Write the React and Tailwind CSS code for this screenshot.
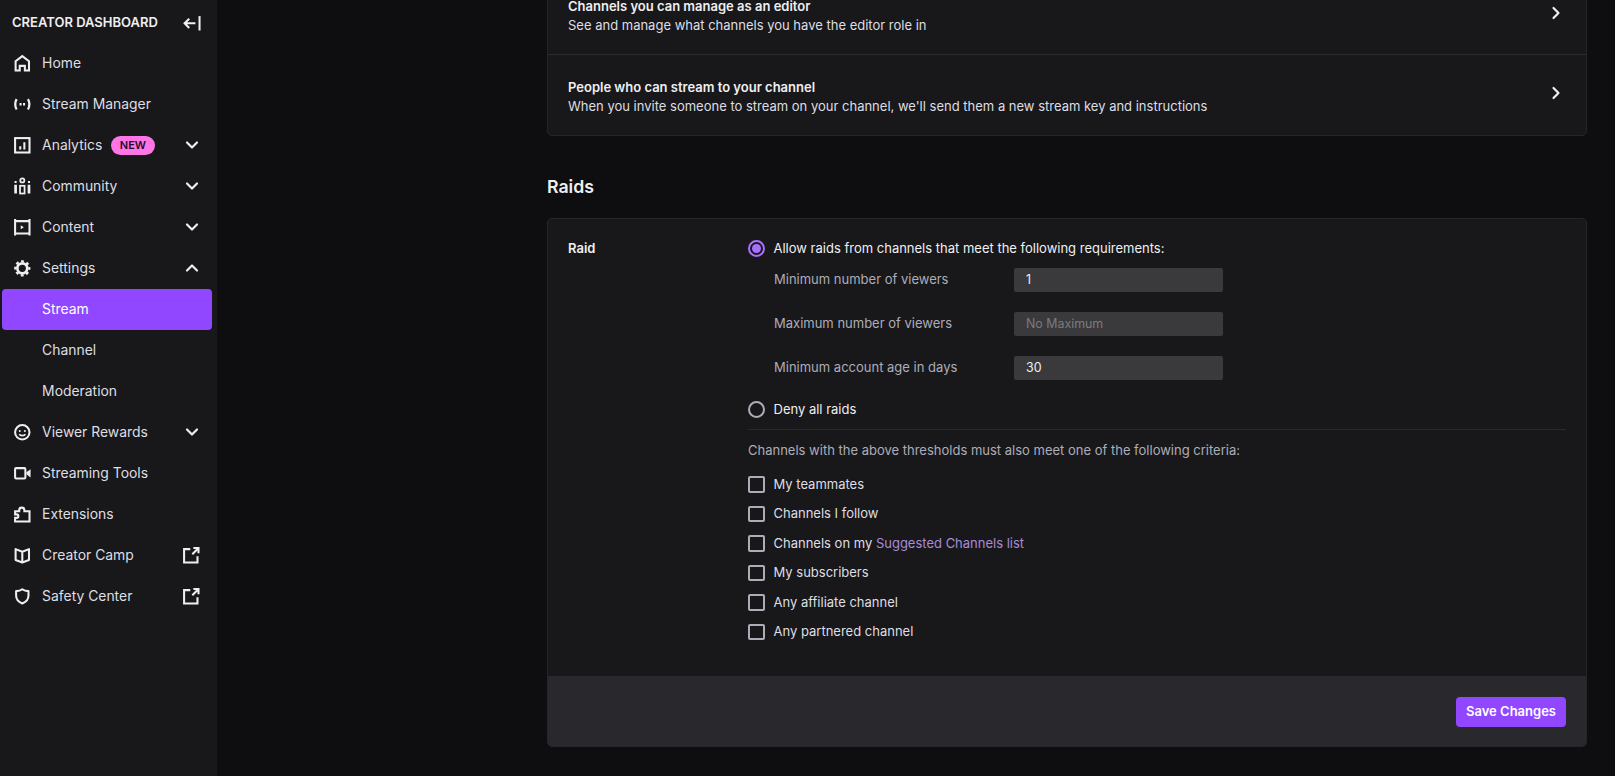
import { ChevronDown, ChevronUp, ChevronRight } from "lucide-react";

const Svg = ({ children }) => (
  <svg viewBox="0 0 20 20" fill="none" stroke="currentColor" strokeWidth="2" className="w-[20.6px] h-[20.6px] shrink-0">
    {children}
  </svg>
);

const HomeIcon = () => (
  <Svg>
    <path d="M3.500 17V8L10 3l6.500 5v9H12.500v-4.500h-5V17h-4z" />
  </Svg>
);
const StreamIcon = () => (
  <Svg>
    <path d="M4.500 5C2.800 8 2.800 12 4.500 15M15.500 5c1.700 3 1.700 7 0 10" strokeWidth="2.200" />
    <path d="M8.300 8.800v2.400M11.700 8.800v2.400" strokeWidth="2" />
  </Svg>
);
const AnalyticsIcon = () => (
  <Svg>
    <rect x="3" y="3" width="14" height="14" />
    <path d="M8 14v-3M12 14V7" />
  </Svg>
);
const CommunityIcon = () => (
  <Svg>
    <circle cx="10" cy="4.300" r="2" strokeWidth="1.700" />
    <rect x="7.800" y="9.500" width="4.400" height="7.500" strokeWidth="1.700" />
    <path d="M3.500 8.500V17M16.500 8.500V17" strokeWidth="2.600" />
    <path d="M2.500 5.800h2M15.500 5.800h2" strokeWidth="2" />
  </Svg>
);
const ContentIcon = () => (
  <Svg>
    <path d="M3 2v16M17 2v16M3 4h14M3 16h14" />
    <path d="M8.500 8v4l3-2-3-2z" fill="currentColor" stroke="none" />
  </Svg>
);
const SettingsIcon = () => (
  <Svg>
    <circle cx="10" cy="10" r="4.800" strokeWidth="2.600" />
    <circle cx="10" cy="10" r="6.800" strokeWidth="2.200" strokeDasharray="2.800 2.540" strokeDashoffset="1.400" />
  </Svg>
);
const SmileIcon = () => (
  <Svg>
    <circle cx="10" cy="10" r="7" />
    <circle cx="7.500" cy="8.800" r="1" fill="currentColor" stroke="none" />
    <circle cx="12.500" cy="8.800" r="1" fill="currentColor" stroke="none" />
    <path d="M7 12c1.200 1.600 4.800 1.600 6 0" strokeWidth="1.600" />
  </Svg>
);
const VideoIcon = () => (
  <Svg>
    <rect x="3" y="5" width="10" height="10" rx="1" />
    <path d="M14 9l4-3v8l-4-3z" fill="currentColor" stroke="none" />
  </Svg>
);
const PuzzleIcon = () => (
  <Svg>
    <path d="M3 17v-3.500h1.500a1.700 1.700 0 000-3.400H3V7h4V6a2.500 2.500 0 015 0v1h5v10H3z" />
  </Svg>
);
const BookIcon = () => (
  <Svg>
    <path d="M10 6.500L16.500 4v10.500L10 17 3.500 14.500V4L10 6.500zM10 6.500V17" strokeLinejoin="round" />
  </Svg>
);
const ShieldIcon = () => (
  <Svg>
    <path d="M4 5c2.500 0 4.500-.6 6-1.800C11.500 4.400 13.500 5 16 5v4.500c0 3.500-2.500 6-6 7.500-3.500-1.500-6-4-6-7.500V5z" strokeLinejoin="round" />
  </Svg>
);
const ExternalIcon = () => (
  <Svg>
    <path d="M9 4H3v13h13v-6M11 9l6-6M12 3h5v5" />
  </Svg>
);
const CollapseIcon = () => (
  <Svg>
    <path d="M18 3v14" />
    <path d="M14 10H4M8 5.500L3.500 10 8 14.500" />
  </Svg>
);

const navItems = [
  { label: "Home", icon: <HomeIcon /> },
  { label: "Stream Manager", icon: <StreamIcon /> },
  { label: "Analytics", icon: <AnalyticsIcon />, badge: "NEW", trail: "down" },
  { label: "Community", icon: <CommunityIcon />, trail: "down" },
  { label: "Content", icon: <ContentIcon />, trail: "down" },
  { label: "Settings", icon: <SettingsIcon />, trail: "up" },
  { label: "Stream", active: true },
  { label: "Channel" },
  { label: "Moderation" },
  { label: "Viewer Rewards", icon: <SmileIcon />, trail: "down" },
  { label: "Streaming Tools", icon: <VideoIcon /> },
  { label: "Extensions", icon: <PuzzleIcon /> },
  { label: "Creator Camp", icon: <BookIcon />, trail: "ext" },
  { label: "Safety Center", icon: <ShieldIcon />, trail: "ext" },
];

function NavItem({ item }) {
  return (
    <div className={`flex items-center h-[41.04px] ml-[2px] mr-[5px] pl-[10px] pr-[10px] rounded-[4px] ${item.active ? "bg-[#9147ff] text-white" : "text-[#dedee3]"}`}>
      <div className="w-[20.6px] mr-[9.5px] shrink-0 flex justify-center text-[#efeff1]">{item.icon}</div>
      <span>{item.label}</span>
      {item.badge && (
        <span className="ml-[9px] h-[19px] px-[8.5px] flex items-center rounded-full bg-[#ff75e6] text-[#1f0a2e] text-[11px] font-semibold">
          {item.badge}
        </span>
      )}
      <div className="ml-auto text-[#efeff1]">
        {item.trail === "down" && <ChevronDown size={20} strokeWidth={2.6} />}
        {item.trail === "up" && <ChevronUp size={20} strokeWidth={2.6} />}
        {item.trail === "ext" && <ExternalIcon />}
      </div>
    </div>
  );
}

function Sidebar() {
  return (
    <aside className="w-[217px] shrink-0 bg-[#18181b] text-[13.9px]">
      <div className="flex items-center justify-between h-[42.6px] pt-[3px] pl-[12px] pr-[15px] text-[#efeff1]">
        <span className="text-[13px] font-semibold">CREATOR DASHBOARD</span>
        <CollapseIcon />
      </div>
      <nav>
        {navItems.map((item) => (
          <NavItem key={item.label} item={item} />
        ))}
      </nav>
    </aside>
  );
}

function LinkRow({ title, desc, border }) {
  return (
    <div className={`flex items-center justify-between px-[20px] h-[80px] ${border ? "border-b border-[#2a2a2e]" : ""}`}>
      <div className="leading-[19px] mt-[3px]">
        <div className="font-semibold text-[#efeff1]">{title}</div>
        <div className="text-[#dedee3]">{desc}</div>
      </div>
      <ChevronRight size={20} strokeWidth={2.6} className="text-[#efeff1] mb-[4px]" />
    </div>
  );
}

function Field({ label, value, placeholder }) {
  return (
    <div className="flex items-center h-[24px] mb-[20px] last:mb-0">
      <span className="w-[240px] text-[#adadb8]">{label}</span>
      <div className={`w-[209px] h-[24px] bg-[#3a3a3d] rounded-[2px] pl-[12px] flex items-center text-[12.4px] ${placeholder ? "text-[#7a7a82]" : "text-[#efeff1]"}`}>
        {value || placeholder}
      </div>
    </div>
  );
}

function Radio({ checked, children }) {
  return (
    <div className="flex items-center text-[#efeff1]">
      <span className={`w-[16.5px] h-[16.5px] rounded-full border-2 flex items-center justify-center mr-[9px] shrink-0 ${checked ? "border-[#a970ff]" : "border-[#adadb8]"}`}>
        {checked && <span className="w-[8.5px] h-[8.5px] rounded-full bg-[#a970ff]" />}
      </span>
      {children}
    </div>
  );
}

function Check({ children }) {
  return (
    <div className="flex items-center h-[29.5px] text-[#dedee3]">
      <span className="w-[16.5px] h-[16.5px] border-2 border-[#adadb8] rounded-[2px] mr-[9px] shrink-0" />
      <span>{children}</span>
    </div>
  );
}

export default function App() {
  return (
    <div className="flex h-[776px] w-[1615px] overflow-hidden bg-[#0e0e10] text-[13px]" style={{ fontFamily: "Inter, 'Liberation Sans', sans-serif" }}>
      <Sidebar />
      <main className="flex-1 pl-[330px] pr-[28px]">
        <div className="-mt-[26px] rounded-[5px] border border-[#26262a] bg-[#18181b]">
          <LinkRow title="Channels you can manage as an editor" desc="See and manage what channels you have the editor role in" border />
          <LinkRow title="People who can stream to your channel" desc="When you invite someone to stream on your channel, we'll send them a new stream key and instructions" />
        </div>

        <h2 className="text-[17.7px] font-semibold text-[#efeff1] mt-[38px] mb-[18px] leading-[26px]">Raids</h2>

        <div className="rounded-[5px] border border-[#26262a] bg-[#18181b] overflow-hidden">
          <div className="flex px-[20px] pt-[19.5px] h-[457px]">
            <div className="w-[180px] shrink-0 font-semibold text-[#efeff1]">Raid</div>
            <div className="flex-1">
              <Radio checked>Allow raids from channels that meet the following requirements:</Radio>
              <div className="pl-[26px] mt-[10px] mb-[19.5px]">
                <Field label="Minimum number of viewers" value="1" />
                <Field label="Maximum number of viewers" placeholder="No Maximum" />
                <Field label="Minimum account age in days" value="30" />
              </div>
              <Radio>Deny all raids</Radio>
              <div className="h-px bg-[#2a2a2e] mt-[10px] mb-[10.5px]" />
              <div className="text-[#adadb8] mb-[9.5px]">Channels with the above thresholds must also meet one of the following criteria:</div>
              <Check>My teammates</Check>
              <Check>Channels I follow</Check>
              <Check>Channels on my <span className="text-[#a98bd6]">Suggested Channels list</span></Check>
              <Check>My subscribers</Check>
              <Check>Any affiliate channel</Check>
              <Check>Any partnered channel</Check>
            </div>
          </div>
          <div className="h-[70px] bg-[#28282d] flex items-center justify-end pr-[20px] pt-[1px]">
            <button className="w-[110px] h-[30px] rounded-[4px] bg-[#9147ff] text-white text-[13px] font-semibold">Save Changes</button>
          </div>
        </div>
      </main>
    </div>
  );
}
